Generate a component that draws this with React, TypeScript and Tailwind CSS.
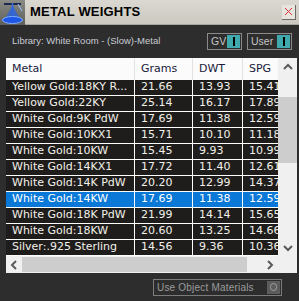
import React from 'react';

const rows = [
  ['Yellow Gold:18KY R...', '21.66', '13.93', '15.41'],
  ['Yellow Gold:22KY', '25.14', '16.17', '17.89'],
  ['White Gold:9K PdW', '17.69', '11.38', '12.59'],
  ['White Gold:10KX1', '15.71', '10.10', '11.18'],
  ['White Gold:10KW', '15.45', '9.93', '10.99'],
  ['White Gold:14KX1', '17.72', '11.40', '12.61'],
  ['White Gold:14K PdW', '20.20', '12.99', '14.37'],
  ['White Gold:14KW', '17.69', '11.38', '12.59'],
  ['White Gold:18K PdW', '21.99', '14.14', '15.65'],
  ['White Gold:18KW', '20.60', '13.25', '14.66'],
  ['Silver:.925 Sterling', '14.56', '9.36', '10.36'],
];

const Chevron = ({ dir }: { dir: 'up' | 'down' | 'left' | 'right' }) => {
  const d = {
    up: 'M1 6 L5 2 L9 6',
    down: 'M1 2 L5 6 L9 2',
    left: 'M6 1 L2 5 L6 9',
    right: 'M2 1 L6 5 L2 9',
  }[dir];
  const vert = dir === 'up' || dir === 'down';
  return (
    <svg width={vert ? 10 : 8} height={vert ? 8 : 10} viewBox={vert ? '0 0 10 8' : '0 0 8 10'}>
      <path d={d} fill="none" stroke="#5a5a5a" strokeWidth="2" />
    </svg>
  );
};

const Toggle = ({ label, w }: { label: string; w: string }) => (
  <div className={`flex items-center h-[17px] border border-[#8a8a8a] ${w} pl-[3px] pr-[1px] justify-between`}>
    <span className="text-[10.5px] text-[#c4c4c4] leading-none">{label}</span>
    <div className="w-[13px] h-[13px] bg-[#3fa9ad] flex items-center justify-center">
      <div className="w-[2px] h-[9px] bg-black" />
    </div>
  </div>
);

export default function App() {
  return (
    <div className="w-[299px] h-[301px] bg-[#2d2d2d] flex flex-col overflow-hidden" style={{ fontFamily: '"Liberation Sans", Arial, sans-serif' }}>
      {/* Title bar */}
      <div className="h-[25px] flex items-center bg-gradient-to-b from-[#dad8d0] to-[#cbc9c0] border-b border-[#a8a69e]">
        <div className="w-[25px] h-[25px] bg-gradient-to-b from-[#8c8c86] to-[#5e5e5a] flex items-center justify-center">
          <svg width="25" height="25" viewBox="0 0 25 25">
            <path d="M4 4 L21 4" stroke="#1a2a50" strokeWidth="2" />
            <path d="M12.5 3 L12.5 17" stroke="#3a6fd8" strokeWidth="1.5" />
            <path d="M12.5 5 L5 19 L20 19 Z" fill="#2a62e0" opacity="0.75" />
            <ellipse cx="12.5" cy="20" rx="10" ry="3.5" fill="#1e56e8" stroke="#7fb0ff" strokeWidth="1" />
            <path d="M18 4 L22 11" stroke="#9cc4ff" strokeWidth="1" />
          </svg>
        </div>
        <span className="ml-[5px] text-[13px] font-bold text-black tracking-[0.2px]">METAL WEIGHTS</span>
        <div className="ml-auto mr-[3px] w-[14px] h-[15px] bg-[#e6e4dc] border-r border-b border-[#6a6a66] flex items-center justify-center">
          <svg width="9" height="9" viewBox="0 0 9 9">
            <path d="M1 1 L8 8 M8 1 L1 8" stroke="#e0303a" strokeWidth="1" />
          </svg>
        </div>
      </div>

      {/* Library row */}
      <div className="h-[33px] flex items-center pl-[12px] pr-[7px]">
        <span className="text-[9.5px] text-[#c8ccd4]">Library: White Room - (Slow)-Metal</span>
        <div className="ml-auto flex gap-[5px]">
          <Toggle label="GV" w="w-[35px]" />
          <Toggle label="User" w="w-[45px]" />
        </div>
      </div>

      {/* Table */}
      <div className="ml-[6px] w-[291px] h-[215px] bg-white flex flex-col" style={{ fontFamily: '"DejaVu Sans", Verdana, sans-serif' }}>
        <div className="flex h-[198px]">
          <div className="w-[272px] overflow-hidden flex flex-col text-[11px]">
            <div className="h-[22px] flex items-center bg-[#fbfbfb] text-[#1a1a3c] shrink-0">
              <div className="w-[129px] pl-[6px] border-r border-[#e2e2e2] h-full flex items-center shrink-0">Metal</div>
              <div className="w-[58px] pl-[6px] border-r border-[#e2e2e2] h-full flex items-center shrink-0">Grams</div>
              <div className="w-[50px] pl-[6px] border-r border-[#e2e2e2] h-full flex items-center shrink-0">DWT</div>
              <div className="w-[50px] pl-[6px] h-full flex items-center shrink-0">SPG</div>
            </div>
            {rows.map((r, i) => (
              <div key={i} className={`h-[16px] flex border-b border-white shrink-0 ${i === 7 ? 'bg-[#0a78d7] text-white' : 'bg-[#1f1d1b] text-[#f2f0ea]'}`}>
                <div className="w-[129px] pl-[6px] border-r border-white flex items-center shrink-0 whitespace-nowrap overflow-hidden">{r[0]}</div>
                <div className="w-[58px] pl-[6px] border-r border-white flex items-center shrink-0">{r[1]}</div>
                <div className="w-[50px] pl-[6px] border-r border-white flex items-center shrink-0">{r[2]}</div>
                <div className="w-[50px] pl-[6px] flex items-center shrink-0">{r[3]}</div>
              </div>
            ))}
          </div>
          {/* vertical scrollbar */}
          <div className="w-[19px] flex flex-col bg-[#f0f0f0]">
            <div className="h-[17px] flex items-center justify-center"><Chevron dir="up" /></div>
            <div className="flex-1">
              <div className="mt-[22px] h-[66px] bg-[#cdcdcd]" />
            </div>
            <div className="h-[17px] flex items-center justify-center"><Chevron dir="down" /></div>
          </div>
        </div>
        {/* horizontal scrollbar */}
        <div className="h-[17px] flex items-center bg-[#f0f0f0]">
          <div className="w-[16px] h-full flex items-center justify-center"><Chevron dir="left" /></div>
          <div className="w-[225px] h-[15px] bg-[#cdcdcd]" />
          <div className="w-[15px]" />
          <div className="w-[16px] h-full flex items-center justify-center"><Chevron dir="right" /></div>
        </div>
      </div>

      {/* Bottom */}
      <div className="flex-1 flex items-center justify-end pr-[17px]">
        <div className="w-[129px] h-[17px] border border-[#7c7c7c] flex items-center pl-[3px] pr-[1px]">
          <span className="text-[10px] text-[#9c9c9c] tracking-[0.2px]">Use Object Materials</span>
          <div className="ml-auto w-[13px] h-[13px] bg-[#5c5c5c] flex items-center justify-center">
            <div className="w-[7px] h-[8px] rounded-full border border-[#a0a0a0]" />
          </div>
        </div>
      </div>
    </div>
  );
}
